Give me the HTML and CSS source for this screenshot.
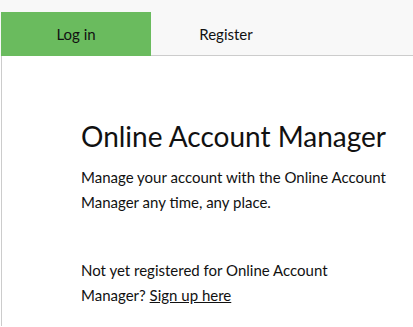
FILE: index.html
```html
<!DOCTYPE html>
<html lang="en">
<head>
    <meta charset="UTF-8">
    <meta name="viewport" content="width=device-width, initial-scale=1.0">
    <title>Online Account Manager</title>
    <link rel="stylesheet" href="styles.css">
</head>
<body>

<!-- Tabs -->
<nav class="tabs">
    <a class="tab active" href="#">Log in</a>
    <a class="tab" href="#">Register</a>
    <div class="tab-rest"></div>
</nav>

<!-- Login Panel -->
<main class="panel">
    <h1>Online Account Manager</h1>
    <p>Manage your account with the Online Account Manager any time, any place.</p>
    <p class="signup">Not yet registered for Online Account Manager? <a href="#">Sign up here</a></p>
</main>

</body>
</html>
```

FILE: styles.css
```css
/* General */
body {
    font-family: 'Lato', 'Open Sans', sans-serif;
    background-color: #fff;
    margin: 0;
    padding: 0;
    color: #111;
}

/* Tabs */
.tabs {
    display: flex;
    background-color: #f8f8f8;
    padding-top: 12px;
    padding-left: 1px;
}

.tab {
    width: 150px;
    height: 43px;
    line-height: 44px;
    text-align: center;
    font-size: 15px;
    color: #111;
    text-decoration: none;
    border-bottom: 1px solid #ccc;
}

.tab.active {
    background-color: #6abb5e;
    border-bottom-color: #6abb5e;
}

.tab-rest {
    flex: 1;
    border-bottom: 1px solid #ccc;
}

/* Panel */
.panel {
    margin-left: 1px;
    border-left: 1px solid #ccc;
    padding: 63px 22px 18px 79px;
}

.panel h1 {
    font-weight: normal;
    font-size: 28px;
    margin: 0 0 12px;
}

.panel p {
    font-size: 15px;
    line-height: 25px;
    margin: 0;
}

.panel .signup {
    margin-top: 43px;
}

.panel a {
    color: #111;
}
```
